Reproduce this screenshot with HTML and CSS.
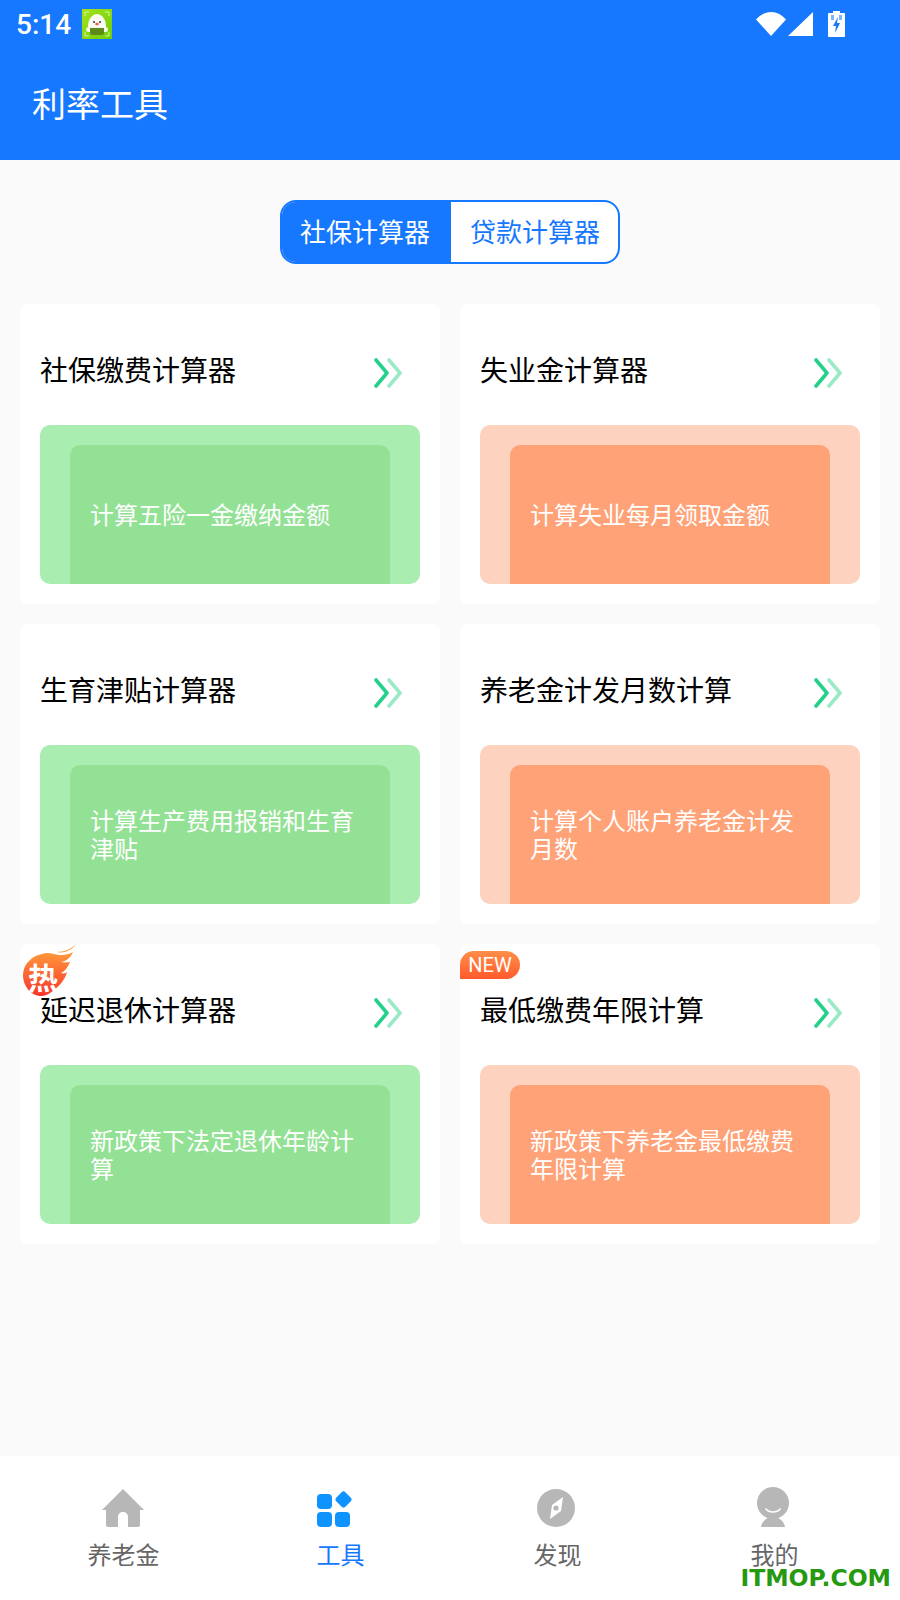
FILE: index.html
```html
<!DOCTYPE html>
<html lang="zh-CN">
<head>
    <meta charset="UTF-8">
    <title>利率工具</title>
    <link rel="stylesheet" href="styles.css">
</head>
<body>
    <div class="page">
        <header class="top">
            <div class="status">
                <span class="time">5:14</span>
                <svg class="app-icon" width="30" height="30" viewBox="0 0 30 30">
                    <defs><linearGradient id="leaf" x1="0" y1="0" x2="1" y2="1"><stop offset="0" stop-color="#a4e41c"/><stop offset="1" stop-color="#6fcb0c"/></linearGradient></defs>
                    <rect width="30" height="30" fill="url(#leaf)"/>
                    <path d="M3 7V3h4M23 3h4v4M3 23v4h4M27 23v4h-4" fill="none" stroke="#d8f5a8" stroke-width="1"/>
                    <path d="M15 5c5 0 9 6 9 12 0 5-4 8-9 8s-9-3-9-8c0-6 4-12 9-12z" fill="#fbfbf2"/>
                    <rect x="4" y="18" width="22" height="5" rx="2.5" fill="#f4f6e6"/>
                    <path d="M8 19h14v5c0 1-1 2-2 2H10c-1 0-2-1-2-2z" fill="#5e8a1c"/>
                    <circle cx="12" cy="13" r="1" fill="#333"/>
                    <circle cx="18" cy="13" r="1" fill="#333"/>
                    <ellipse cx="15" cy="15" rx="1.8" ry="1.2" fill="#ef5a4c"/>
                </svg>
                <span class="status-right">
                    <svg width="30" height="24" viewBox="0 0 30 24"><path d="M0 7.5C4 3 9 0 15 0s11 3 15 7.5L15 24z" fill="#fff"/></svg>
                    <svg width="25" height="24" viewBox="0 0 25 24"><path d="M25 0v24H0z" fill="#fff"/></svg>
                    <svg class="battery" width="17" height="26" viewBox="0 0 17 26"><path d="M5 0h7v2h4c.6 0 1 .4 1 1v22c0 .6-.4 1-1 1H1c-.6 0-1-.4-1-1V3c0-.6.4-1 1-1h4z" fill="#fff"/><path d="M10 6l-5 9h3l-1 7 5-10H9z" fill="#1677ff"/><path d="M3 4h3v5H3zM11 4h3v5h-3z" fill="#1677ff" opacity=".55"/></svg>
                </span>
            </div>
            <h1 class="top-title">利率工具</h1>
        </header>

        <main class="content">
            <div class="tabs">
                <div class="tab active">社保计算器</div>
                <div class="tab">贷款计算器</div>
            </div>

            <div class="grid">
                <div class="card green">
                    <div class="card-head">
                        <span class="card-title">社保缴费计算器</span>
                        <svg class="chev" width="28" height="30" viewBox="0 0 28 30"><path d="M15 2l11 13-11 13" fill="none" stroke="#9beac6" stroke-width="3.600" stroke-linecap="round" stroke-linejoin="round"/><path d="M2 2l11 13L2 28" fill="none" stroke="#25d08a" stroke-width="3.600" stroke-linecap="round" stroke-linejoin="round"/></svg>
                    </div>
                    <div class="panel"><div class="panel-inner">计算五险一金缴纳金额</div></div>
                </div>
                <div class="card orange">
                    <div class="card-head">
                        <span class="card-title">失业金计算器</span>
                        <svg class="chev" width="28" height="30" viewBox="0 0 28 30"><path d="M15 2l11 13-11 13" fill="none" stroke="#9beac6" stroke-width="3.600" stroke-linecap="round" stroke-linejoin="round"/><path d="M2 2l11 13L2 28" fill="none" stroke="#25d08a" stroke-width="3.600" stroke-linecap="round" stroke-linejoin="round"/></svg>
                    </div>
                    <div class="panel"><div class="panel-inner">计算失业每月领取金额</div></div>
                </div>
                <div class="card green">
                    <div class="card-head">
                        <span class="card-title">生育津贴计算器</span>
                        <svg class="chev" width="28" height="30" viewBox="0 0 28 30"><path d="M15 2l11 13-11 13" fill="none" stroke="#9beac6" stroke-width="3.600" stroke-linecap="round" stroke-linejoin="round"/><path d="M2 2l11 13L2 28" fill="none" stroke="#25d08a" stroke-width="3.600" stroke-linecap="round" stroke-linejoin="round"/></svg>
                    </div>
                    <div class="panel"><div class="panel-inner">计算生产费用报销和生育津贴</div></div>
                </div>
                <div class="card orange">
                    <div class="card-head">
                        <span class="card-title">养老金计发月数计算</span>
                        <svg class="chev" width="28" height="30" viewBox="0 0 28 30"><path d="M15 2l11 13-11 13" fill="none" stroke="#9beac6" stroke-width="3.600" stroke-linecap="round" stroke-linejoin="round"/><path d="M2 2l11 13L2 28" fill="none" stroke="#25d08a" stroke-width="3.600" stroke-linecap="round" stroke-linejoin="round"/></svg>
                    </div>
                    <div class="panel"><div class="panel-inner">计算个人账户养老金计发月数</div></div>
                </div>
                <div class="card green">
                    <div class="hot">
                        <svg width="54" height="52" viewBox="0 0 54 52">
                            <defs><linearGradient id="fire" x1="0" y1="0" x2="0" y2="1"><stop offset="0" stop-color="#ff9a3a"/><stop offset="1" stop-color="#f9342c"/></linearGradient></defs>
                            <path d="M53 0C48 5 42 8 33 8c8 1.500 15-1 20-8z" fill="#ff9a3a"/>
                            <path d="M19 10c7-3 14 2 21 1 4-.5 8-1.500 10-3-2 5-6 9-12 10 4 1 8 0 9 0-2 5-5 9-9 11 3 1 5 0 6-1-2 8-8 14-14 19-4 3-8 5-12 5C8 52 0 42 0 31 0 20 9 12 19 10z" fill="url(#fire)"/>
                        </svg>
                        <span class="hot-text">热</span>
                    </div>
                    <div class="card-head">
                        <span class="card-title">延迟退休计算器</span>
                        <svg class="chev" width="28" height="30" viewBox="0 0 28 30"><path d="M15 2l11 13-11 13" fill="none" stroke="#9beac6" stroke-width="3.600" stroke-linecap="round" stroke-linejoin="round"/><path d="M2 2l11 13L2 28" fill="none" stroke="#25d08a" stroke-width="3.600" stroke-linecap="round" stroke-linejoin="round"/></svg>
                    </div>
                    <div class="panel"><div class="panel-inner">新政策下法定退休年龄计算</div></div>
                </div>
                <div class="card orange">
                    <div class="new">NEW</div>
                    <div class="card-head">
                        <span class="card-title">最低缴费年限计算</span>
                        <svg class="chev" width="28" height="30" viewBox="0 0 28 30"><path d="M15 2l11 13-11 13" fill="none" stroke="#9beac6" stroke-width="3.600" stroke-linecap="round" stroke-linejoin="round"/><path d="M2 2l11 13L2 28" fill="none" stroke="#25d08a" stroke-width="3.600" stroke-linecap="round" stroke-linejoin="round"/></svg>
                    </div>
                    <div class="panel"><div class="panel-inner">新政策下养老金最低缴费年限计算</div></div>
                </div>
            </div>
        </main>

        <nav class="tabbar">
            <div class="nav-item">
                <svg class="icon-home" width="42" height="38" viewBox="0 0 42 38"><path d="M21 0l21 21h-4v15c0 1-1 2-2 2H26V28c0-3-2-5-5-5s-5 2-5 5v10H6c-1 0-2-1-2-2V21H0z" fill="#b7b7b7"/></svg>
                <span>养老金</span>
            </div>
            <div class="nav-item on">
                <svg class="icon-tools" width="36" height="36" viewBox="0 0 36 36"><rect x="0" y="3" width="15" height="15" rx="4" fill="#0f93ff"/><rect x="0" y="21" width="15" height="15" rx="4" fill="#0f93ff"/><rect x="18" y="21" width="15" height="15" rx="4" fill="#0f93ff"/><rect x="20" y="2" width="13" height="13" rx="3" transform="rotate(45 26.500 8.500)" fill="#0f93ff"/></svg>
                <span>工具</span>
            </div>
            <div class="nav-item">
                <svg class="icon-find" width="38" height="38" viewBox="0 0 38 38"><circle cx="19" cy="19" r="19" fill="#b7b7b7"/><path d="M26 8l-2 14-11 8 2-14z" fill="#fff"/><circle cx="19" cy="19" r="2.600" fill="#b7b7b7"/></svg>
                <span>发现</span>
            </div>
            <div class="nav-item">
                <svg class="icon-me" width="32" height="40" viewBox="0 0 32 40"><circle cx="16" cy="16" r="16" fill="#b7b7b7"/><path d="M9 22c3 4 11 4 14 0" fill="none" stroke="#fff" stroke-width="1.600" stroke-linecap="round"/><path d="M4 40c1-6 6-10 12-10s11 4 12 10z" fill="#b7b7b7"/></svg>
                <span>我的</span>
            </div>
        </nav>

        <div class="watermark">ITMOP.COM</div>
    </div>
</body>
</html>
```

FILE: styles.css
```css
body {
    margin: 0;
    background-color: #fafafa;
    font-family: "Noto Sans CJK SC", "Noto Sans", sans-serif;
}

.page {
    position: relative;
    display: flex;
    flex-direction: column;
    height: 1600px;
    overflow: hidden;
}

/* top blue area */
.top {
    height: 160px;
    background-color: #1677ff;
    color: #fff;
}

.status {
    display: flex;
    align-items: center;
    height: 48px;
    padding-left: 16px;
}

.time {
    padding-top: 2px;
    font-family: Roboto, sans-serif;
    font-size: 28px;
    font-weight: 500;
    line-height: 46px;
}

.app-icon {
    margin-left: 11px;
}

.status-right {
    display: flex;
    align-items: center;
    gap: 2px;
    margin-left: auto;
    margin-right: 55px;
}

.battery {
    margin-left: 13px;
}

.top-title {
    margin: 31px 0 0 32px;
    font-size: 34px;
    font-weight: 400;
    line-height: 48px;
}

/* main */
.content {
    flex: 1;
    padding: 40px 20px 0;
}

.tabs {
    display: flex;
    width: 340px;
    height: 64px;
    margin: 0 auto 40px;
    border: 2px solid #1677ff;
    border-radius: 16px;
    box-sizing: border-box;
    overflow: hidden;
    background-color: #fff;
}

.tab {
    width: 167px;
    padding-left: 1px;
    box-sizing: border-box;
    font-size: 26px;
    line-height: 58px;
    text-align: center;
    color: #1677ff;
}

.tab.active {
    width: 169px;
    padding: 0 3px 0 0;
    background-color: #1677ff;
    color: #fff;
}

.grid {
    display: grid;
    grid-template-columns: 420px 420px;
    grid-auto-rows: 300px;
    gap: 20px;
}

.card {
    position: relative;
    display: flex;
    flex-direction: column;
    padding: 0 20px 20px;
    background-color: #fff;
    border-radius: 6px;
}

.card-head {
    display: flex;
    align-items: center;
    justify-content: space-between;
    height: 121px;
    padding: 9px 18px 0 0;
    box-sizing: border-box;
}

.card-title {
    font-size: 28px;
    line-height: 40px;
    color: #000;
}

.chev {
    margin-top: 7px;
}

.panel {
    flex: 1;
    display: flex;
    padding: 20px 30px 0;
    border-radius: 10px;
    overflow: hidden;
}

.panel-inner {
    flex: 1;
    display: flex;
    align-items: center;
    padding: 0 20px 2px;
    border-radius: 10px 10px 0 0;
    font-size: 24px;
    line-height: 28px;
    color: #fff;
}

.green .panel {
    background-color: #a9eeb0;
}

.green .panel-inner {
    background-color: #93e195;
}

.orange .panel {
    background-color: #fdd2bf;
}

.orange .panel-inner {
    background-color: #ffa277;
}

/* badges */
.hot {
    position: absolute;
    top: 0;
    left: 3px;
    width: 54px;
    height: 52px;
}

.hot-text {
    position: absolute;
    left: 5px;
    top: 14px;
    font-size: 30px;
    font-weight: 700;
    line-height: 36px;
    color: #fff;
}

.new {
    position: absolute;
    top: 7px;
    left: 0;
    width: 60px;
    height: 28px;
    border-radius: 14px 14px 14px 0;
    background: linear-gradient(#ff8f48, #ff5a2c);
    font-family: Roboto, sans-serif;
    font-size: 20px;
    line-height: 29px;
    text-align: center;
    color: #fff;
}

/* bottom bar */
.tabbar {
    display: flex;
    height: 144px;
    padding: 0 17px 0 15px;
    background-color: #fff;
}

.nav-item {
    flex: 1;
    display: flex;
    flex-direction: column;
    align-items: center;
    justify-content: flex-end;
    height: 116px;
    font-size: 24px;
    line-height: 36px;
    color: #666;
}

.nav-item svg {
    margin-bottom: 9px;
}

.nav-item .icon-home {
    margin-right: 2px;
}

.nav-item .icon-tools {
    margin-right: 12px;
}

.nav-item .icon-find,
.nav-item .icon-me {
    margin-right: 4px;
}

.nav-item.on {
    color: #1677ff;
}

.watermark {
    position: absolute;
    right: 9px;
    bottom: 9px;
    font-family: "DejaVu Sans", sans-serif;
    font-size: 23.5px;
    font-weight: 700;
    line-height: 26px;
    color: #25990f;
}
```
